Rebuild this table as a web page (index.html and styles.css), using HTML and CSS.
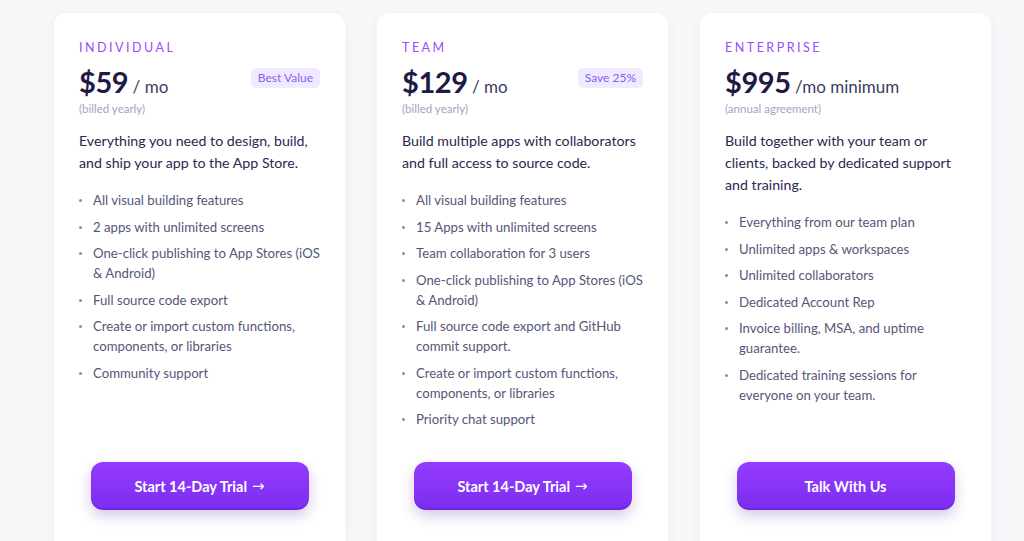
FILE: index.html
```html
<!DOCTYPE html>
<html>
<head>
<meta charset="utf-8">
<link rel="stylesheet" href="styles.css">
</head>
<body>
<div class="plans">
  <div class="card">
    <div class="label">INDIVIDUAL</div>
    <div class="price-row">
      <div class="price"><span class="amount">$59</span><span class="per"> / mo</span></div>
      <span class="badge">Best Value</span>
    </div>
    <div class="billed">(billed yearly)</div>
    <p class="desc">Everything you need to design, build, and ship your app to the App Store.</p>
    <ul class="features">
      <li>All visual building features</li>
      <li>2 apps with unlimited screens</li>
      <li>One-click publishing to App Stores (iOS &amp; Android)</li>
      <li>Full source code export</li>
      <li>Create or import custom functions, components, or libraries</li>
      <li>Community support</li>
    </ul>
    <a class="btn">Start 14-Day Trial <span class="arrow">→</span></a>
  </div>
  <div class="card">
    <div class="label">TEAM</div>
    <div class="price-row">
      <div class="price"><span class="amount">$129</span><span class="per"> / mo</span></div>
      <span class="badge">Save 25%</span>
    </div>
    <div class="billed">(billed yearly)</div>
    <p class="desc">Build multiple apps with collaborators and full access to source code.</p>
    <ul class="features">
      <li>All visual building features</li>
      <li>15 Apps with unlimited screens</li>
      <li>Team collaboration for 3 users</li>
      <li>One-click publishing to App Stores (iOS &amp; Android)</li>
      <li>Full source code export and GitHub commit support.</li>
      <li>Create or import custom functions, components, or libraries</li>
      <li>Priority chat support</li>
    </ul>
    <a class="btn">Start 14-Day Trial <span class="arrow">→</span></a>
  </div>
  <div class="card">
    <div class="label">ENTERPRISE</div>
    <div class="price-row">
      <div class="price"><span class="amount">$995</span><span class="per"> /mo minimum</span></div>
    </div>
    <div class="billed">(annual agreement)</div>
    <p class="desc">Build together with your team or clients, backed by dedicated support and training.</p>
    <ul class="features">
      <li>Everything from our team plan</li>
      <li>Unlimited apps &amp; workspaces</li>
      <li>Unlimited collaborators</li>
      <li>Dedicated Account Rep</li>
      <li>Invoice billing, MSA, and uptime guarantee.</li>
      <li>Dedicated training sessions for everyone on your team.</li>
    </ul>
    <a class="btn">Talk With Us</a>
  </div>
</div>
</body>
</html>
```

FILE: styles.css
```css
* { box-sizing: border-box; }
html, body { margin: 0; padding: 0; }
body {
  background: #f8f8fb;
  font-family: Lato, "Noto Sans", sans-serif;
  overflow: hidden;
  height: 541px;
}
.plans {
  display: flex;
  gap: 32px;
  padding: 13px 0 0 54px;
}
.card {
  width: 291px;
  height: 540px;
  background: #ffffff;
  border-radius: 12px;
  box-shadow: 0 2px 14px rgba(40, 40, 90, 0.05);
  padding: 27px 25px 43px 25px;
  display: flex;
  flex-direction: column;
}
.label {
  font-size: 12.5px;
  line-height: 16px;
  letter-spacing: 2.5px;
  color: #9b4cf8;
  font-weight: 400;
}
.price-row {
  margin-top: 8px;
  display: flex;
  justify-content: space-between;
  align-items: center;
  height: 34px;
}
.amount {
  font-size: 29px;
  font-weight: 700;
  color: #1d1a45;
  letter-spacing: -0.4px;
}
.per {
  font-size: 17px;
  color: #3d3b60;
}
.badge {
  font-size: 12px;
  line-height: 20px;
  padding: 0 7px;
  border-radius: 5px;
  background: #efeaff;
  color: #8b5cf6;
  font-weight: 400;
  margin-top: -6px;
}
.billed {
  margin-top: 3px;
  font-size: 11.5px;
  line-height: 16px;
  color: #a3a3bd;
}
.desc {
  margin: 13px 0 0 0;
  font-size: 14.2px;
  line-height: 22px;
  color: #2a2850;
  font-weight: 400;
}
.features {
  list-style: none;
  margin: 16px 0 0 0;
  padding: 0;
}
.features li {
  position: relative;
  padding-left: 14px;
  font-size: 13.2px;
  line-height: 20px;
  color: #565678;
  margin-bottom: 6.5px;
}
.features li::before {
  content: "";
  position: absolute;
  left: 0;
  top: 9px;
  width: 3px;
  height: 3px;
  border-radius: 50%;
  background: #8a8aa5;
}
.btn {
  margin-top: auto;
  align-self: center;
  width: 218px;
  height: 48px;
  border-radius: 12px;
  background: linear-gradient(180deg, #943bff 0%, #7b2ef0 100%);
  box-shadow: 0 6px 14px rgba(90, 40, 170, 0.25), inset 0 -2px 0 rgba(70, 20, 160, 0.25);
  color: #ffffff;
  font-size: 14.5px;
  font-weight: 700;
  display: flex;
  align-items: center;
  justify-content: center;
  gap: 5px;
  text-decoration: none;
}
.arrow {
  font-family: "DejaVu Sans", sans-serif;
  font-weight: 400;
  font-size: 15px;
}
```
